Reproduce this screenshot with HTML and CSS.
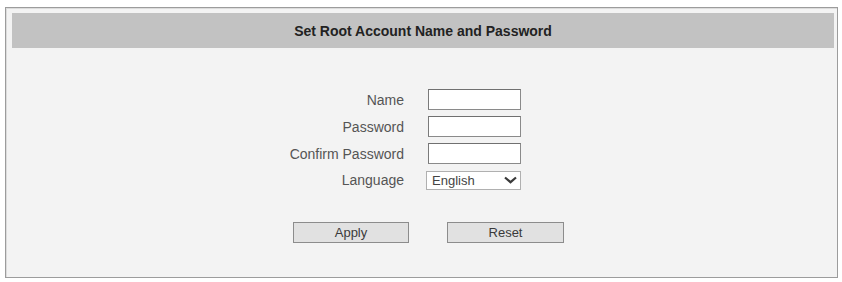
FILE: index.html
```html
<!DOCTYPE html>
<html>
<head>
<meta charset="utf-8">
<link rel="stylesheet" href="styles.css">
</head>
<body>
<div class="panel">
  <div class="header">Set Root Account Name and Password</div>
  <div class="form">
    <label class="label" for="name">Name</label>
    <input class="field" id="name" type="text">
    <label class="label" for="pw">Password</label>
    <input class="field" id="pw" type="password">
    <label class="label" for="pw2">Confirm Password</label>
    <input class="field" id="pw2" type="password">
    <label class="label" for="lang">Language</label>
    <span class="select-wrap">
      <select class="select" id="lang"><option>English</option></select>
      <svg class="chev" width="13" height="8" viewBox="0 0 13 8"><path d="M1 1.5 L6.5 6.2 L12 1.5" fill="none" stroke="#3a3a3a" stroke-width="2.2"/></svg>
    </span>
  </div>
  <div class="buttons">
    <button class="btn btn-apply" type="button">Apply</button>
    <button class="btn btn-reset" type="button">Reset</button>
  </div>
</div>
</body>
</html>
```
FILE: styles.css
```css
html, body {
  margin: 0;
  padding: 0;
  background: #ffffff;
  font-family: "Liberation Sans", Arial, sans-serif;
}
.panel {
  margin: 7px 4px 0 5px;
  height: 271px;
  box-sizing: border-box;
  border: 1px solid #9c9c9c;
  box-shadow: inset 1px 1px 0 #dcdcdc;
  background: #f3f3f3;
  padding: 5px 3px 0 6px;
}
.header {
  height: 35px;
  background: #c2c2c2;
  display: flex;
  align-items: center;
  justify-content: center;
  font-weight: bold;
  font-size: 14px;
  color: #222222;
}
.form {
  display: grid;
  grid-template-columns: 392px 95px;
  column-gap: 24px;
  row-gap: 6px;
  margin-top: 41px;
}
.label {
  align-self: center;
  text-align: right;
  font-size: 14px;
  color: #555555;
}
.field {
  width: 93px;
  height: 21px;
  box-sizing: border-box;
  margin: 0;
  border: 1px solid #8a8a8a;
  border-top-color: #707070;
  border-left-color: #7a7a7a;
  background: #ffffff;
  padding: 0 3px;
}
.select-wrap {
  position: relative;
  width: 95px;
  height: 19px;
  margin-left: -2px;
  margin-top: 1px;
}
.select {
  appearance: none;
  -webkit-appearance: none;
  width: 95px;
  height: 19px;
  margin: 0;
  box-sizing: border-box;
  border: 1px solid #b0b0b0;
  background: #ffffff;
  font-family: "Liberation Sans", Arial, sans-serif;
  font-size: 13px;
  color: #444;
  padding: 0 0 0 5px;
  border-radius: 0;
}
.chev {
  position: absolute;
  right: 4px;
  top: 5px;
  pointer-events: none;
}
.buttons {
  display: flex;
  gap: 38px;
  padding-left: 281px;
  margin-top: 32px;
}
.btn {
  height: 21px;
  margin: 0;
  box-sizing: border-box;
  border: 1px solid #8c8c8c;
  background: #e1e1e1;
  font-family: "Liberation Sans", Arial, sans-serif;
  font-size: 13px;
  color: #3a3a3a;
  padding: 0;
  border-radius: 0;
}
.btn-apply { width: 116px; }
.btn-reset { width: 117px; }
```
